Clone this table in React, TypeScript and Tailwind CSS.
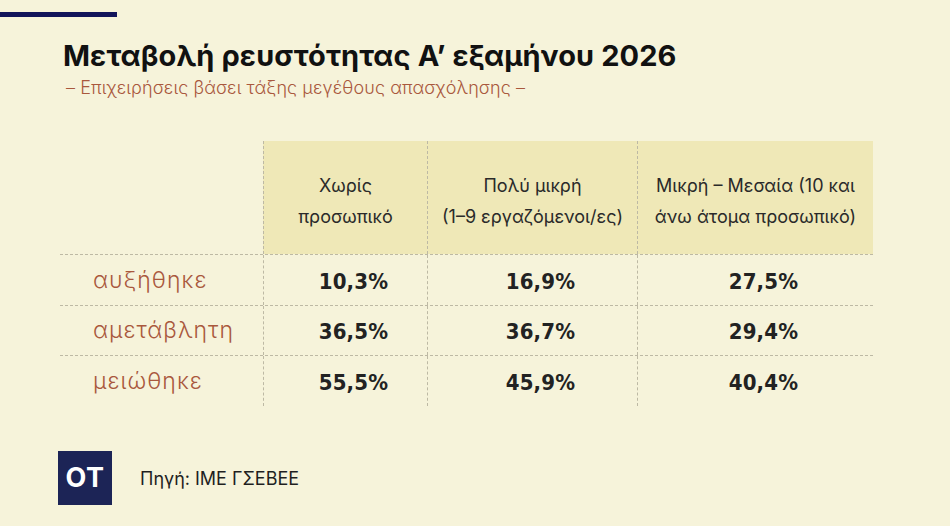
import React from 'react';

const columns = [
  { title: ['Χωρίς', 'προσωπικό'], width: 'w-[164px]' },
  { title: ['Πολύ μικρή', '(1–9 εργαζόμενοι/ες)'], width: 'w-[210px]' },
  { title: ['Μικρή – Μεσαία (10 και', 'άνω άτομα προσωπικό)'], width: 'w-[236px]' },
];

const rows = [
  { label: 'αυξήθηκε', values: ['10,3%', '16,9%', '27,5%'], h: 'h-[51px]' },
  { label: 'αμετάβλητη', values: ['36,5%', '36,7%', '29,4%'], h: 'h-[50px]' },
  { label: 'μειώθηκε', values: ['55,5%', '45,9%', '40,4%'], h: 'h-[51px]' },
];

export default function App() {
  return (
    <div className="w-[950px] h-[526px] bg-[#f6f3da] overflow-hidden font-['Inter',sans-serif] text-[#1f1f1f]">
      {/* Top accent */}
      <div className="mt-[12px] h-[5px] w-[117px] bg-[#12145a]" />

      {/* Heading */}
      <div className="pl-[63px] mt-[22px]">
        <h1 className="text-[29px] leading-[34px] font-bold tracking-[0.1px] text-[#111]">
          Μεταβολή ρευστότητας Α’ εξαμήνου 2026
        </h1>
        <p className="mt-[3px] pl-[3px] text-[18px] leading-[24px] font-light tracking-[0.1px] text-[#a9583d]">
          – Επιχειρήσεις βάσει τάξης μεγέθους απασχόλησης –
        </p>
      </div>

      {/* Table */}
      <div className="ml-[60px] mt-[41px] w-[813px]">
        <div className="flex h-[113px]">
          <div className="w-[203px]" />
          {columns.map((c) => (
            <div
              key={c.title[0]}
              className={`${c.width} bg-[#efe8b7] border-l border-dashed border-[#bdb9a4] flex flex-col items-center justify-center pt-[6px] text-[18px] leading-[31px] text-[#2a2a2a]`}
            >
              <span>{c.title[0]}</span>
              <span>{c.title[1]}</span>
            </div>
          ))}
        </div>
        {rows.map((r) => (
          <div key={r.label} className={`flex ${r.h} border-t border-dashed border-[#bdb9a4]`}>
            <div className="w-[203px] pl-[33px] flex items-center text-[23px] tracking-[1px] text-[#a9583d] font-light">
              {r.label}
            </div>
            {r.values.map((v, i) => (
              <div
                key={i}
                className={`${columns[i].width} border-l border-dashed border-[#bdb9a4] flex items-center justify-center pl-[16px] pt-[2px] font-['DejaVu_Sans_Condensed','Roboto',sans-serif] text-[22px] font-bold tracking-[0.2px] text-[#222]`}
              >
                {v}
              </div>
            ))}
          </div>
        ))}
      </div>

      {/* Footer */}
      <div className="mt-[45px] ml-[58px] flex items-center gap-[28px]">
        <div className="w-[54px] h-[54px] bg-[#1c2456] flex items-center justify-center text-white text-[27px] font-bold tracking-[0.5px]">
          OT
        </div>
        <span className="text-[18px] text-[#1f1f1f]">Πηγή: ΙΜΕ ΓΣΕΒΕΕ</span>
      </div>
    </div>
  );
}
